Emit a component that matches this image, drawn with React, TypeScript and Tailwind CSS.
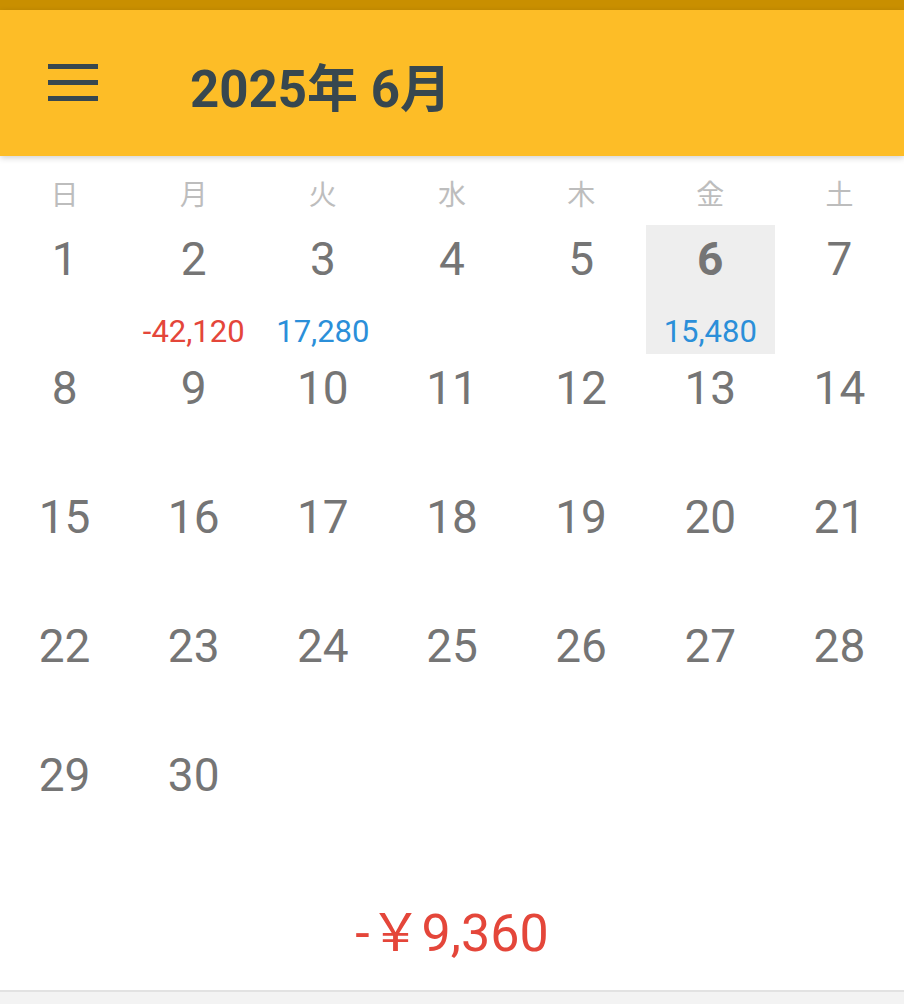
import React from 'react';

const weekdays = ['日', '月', '火', '水', '木', '金', '土'];

const amounts: Record<number, { value: string; type: 'out' | 'in' }> = {
  2: { value: '-42,120', type: 'out' },
  3: { value: '17,280', type: 'in' },
  6: { value: '15,480', type: 'in' },
};

const today = 6;

function DayCell({ day }: { day: number | null }) {
  if (day === null) return <div className="h-[129px]" />;
  const amount = amounts[day];
  const isToday = day === today;
  return (
    <div className={`h-[129px] flex flex-col items-center ${isToday ? 'bg-[#eeeeee]' : ''}`}>
      <div
        className={`mt-[6px] h-[56px] leading-[56px] text-[46px] text-[#757575] ${isToday ? 'font-bold' : ''}`}
      >
        {day}
      </div>
      {amount && (
        <div
          className={`mt-[25px] leading-[40px] text-[31px] ${
            amount.type === 'out' ? 'text-[#e4463a]' : 'text-[#2b8fd9]'
          }`}
        >
          {amount.value}
        </div>
      )}
    </div>
  );
}

function App() {
  const cells: (number | null)[] = [];
  for (let d = 1; d <= 30; d++) cells.push(d);
  while (cells.length < 35) cells.push(null);

  return (
    <div
      className="w-[904px] h-[1004px] bg-white flex flex-col overflow-hidden"
      style={{ fontFamily: 'Roboto, "Noto Sans CJK JP", sans-serif' }}
    >
      <div className="h-[10px] bg-[#c98f00]" />
      <header className="h-[146px] bg-[#fdbd27] flex items-center shadow-[0_2px_6px_rgba(0,0,0,0.18)] relative z-10">
        <div className="ml-[48px] w-[50px] flex flex-col gap-[11px] mt-[-2px]">
          <span className="h-[5px] bg-[#37474f]" />
          <span className="h-[5px] bg-[#37474f]" />
          <span className="h-[5px] bg-[#37474f]" />
        </div>
        <h1 className="ml-[92px] text-[51px] font-bold text-[#37474f] leading-none mt-[12px]">
          2025年 6月
        </h1>
      </header>

      <div className="grid grid-cols-7 h-[69px] items-center pt-[10px]">
        {weekdays.map((w) => (
          <div key={w} className="text-center text-[28px] text-[#bdbdbd]">
            {w}
          </div>
        ))}
      </div>

      <div className="grid grid-cols-7">
        {cells.map((d, i) => (
          <DayCell key={i} day={d} />
        ))}
      </div>

      <div className="flex-1 flex items-center justify-center pt-[8px]">
        <span className="text-[52px] text-[#e4463a] leading-none">-￥9,360</span>
      </div>
      <div className="h-[14px] bg-[#f3f3f3] border-t-2 border-[#e2e2e2]" />
    </div>
  );
}

export default App;
